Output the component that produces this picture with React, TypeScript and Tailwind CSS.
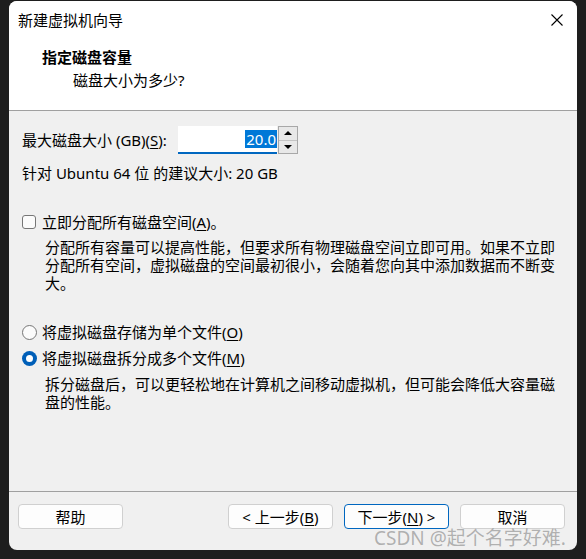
import React from "react";

const U = ({ children }: { children: React.ReactNode }) => (
  <span className="underline underline-offset-2 decoration-1">{children}</span>
);

export default function App() {
  return (
    <div className="w-[586px] h-[559px] bg-[#1e1e1e] pl-[9px] pt-[1px] relative overflow-hidden font-['Noto_Sans','Noto_Sans_CJK_SC',sans-serif] text-[15px] text-black">
      <div className="w-[568px] h-[549px] rounded-[8px] overflow-hidden bg-[#f0f0f0] flex flex-col">
        {/* Header */}
        <div className="h-[109px] bg-white border-b border-[#a0a0a0] box-content relative">
          <div className="pt-[9px] pl-[9px] leading-[20px]">新建虚拟机向导</div>
          <svg className="absolute left-[542px] top-[13px]" width="12" height="12" viewBox="0 0 12 12">
            <path d="M0.5 0.5 L11.5 11.5 M11.5 0.5 L0.5 11.5" stroke="#000" strokeWidth="1.1" fill="none" />
          </svg>
          <div className="mt-[17px] pl-[33px] leading-[20px] font-bold">指定磁盘容量</div>
          <div className="mt-[3px] pl-[64px] leading-[20px]">磁盘大小为多少?</div>
        </div>

        {/* Body */}
        <div className="flex-1 px-[13px]">
          <div className="mt-[15px] flex items-center h-[28px]">
            <div className="w-[156px] leading-[20px] whitespace-nowrap">
              最大磁盘大小 (GB)(<U>S</U>):
            </div>
            <div className="w-[99px] h-[28px] bg-white border-b-2 border-[#0067c0] flex items-center justify-end">
              <span className="bg-[#0078d7] text-white leading-[18px] px-[1px]">20.0</span>
            </div>
            <div className="ml-[1px] w-[20px] h-[28px] border border-[#a8a8a8] flex flex-col">
              <div className="flex-1 bg-[#e8e8e8] border-b border-[#c4c4c4] flex items-center justify-center">
                <svg width="8" height="4" viewBox="0 0 8 4"><path d="M0 4 L4 0 L8 4 Z" fill="#000" /></svg>
              </div>
              <div className="flex-1 bg-[#e8e8e8] flex items-center justify-center">
                <svg width="8" height="4" viewBox="0 0 8 4"><path d="M0 0 L8 0 L4 4 Z" fill="#000" /></svg>
              </div>
            </div>
          </div>

          <div className="mt-[9px] leading-[20px] whitespace-nowrap">针对 Ubuntu 64 位 的建议大小: 20 GB</div>

          <div className="mt-[29px] flex items-center h-[20px]">
            <div className="w-[14px] h-[14px] rounded-[3px] border border-[#767676] bg-[#fbfbfb]" />
            <div className="ml-[6px] leading-[20px] whitespace-nowrap">立即分配所有磁盘空间(<U>A</U>)。</div>
          </div>

          <div className="mt-[6px] ml-[23px] leading-[18px]">
            <div className="whitespace-nowrap">分配所有容量可以提高性能，但要求所有物理磁盘空间立即可用。如果不立即</div>
            <div className="whitespace-nowrap">分配所有空间，虚拟磁盘的空间最初很小，会随着您向其中添加数据而不断变</div>
            <div className="whitespace-nowrap">大。</div>
          </div>

          <div className="mt-[30px] flex items-center h-[20px]">
            <div className="w-[15px] h-[15px] rounded-full border border-[#767676] bg-[#fbfbfb]" />
            <div className="ml-[5px] leading-[20px] whitespace-nowrap">将虚拟磁盘存储为单个文件(<U>O</U>)</div>
          </div>

          <div className="mt-[6px] flex items-center h-[20px]">
            <div className="w-[15px] h-[15px] rounded-full bg-[#005fb8] flex items-center justify-center">
              <div className="w-[7px] h-[7px] rounded-full bg-white" />
            </div>
            <div className="ml-[5px] leading-[20px] whitespace-nowrap">将虚拟磁盘拆分成多个文件(<U>M</U>)</div>
          </div>

          <div className="mt-[7px] ml-[23px] leading-[18px]">
            <div className="whitespace-nowrap">拆分磁盘后，可以更轻松地在计算机之间移动虚拟机，但可能会降低大容量磁</div>
            <div className="whitespace-nowrap">盘的性能。</div>
          </div>
        </div>

        {/* Footer */}
        <div className="h-[46px] border-t border-[#a0a0a0] box-content pt-[12px] pl-[9px] pr-[12px] flex items-start">
          <button className="w-[105px] h-[25px] rounded-[4px] border border-[#d0d0d0] bg-[#fdfdfd] leading-[20px]">帮助</button>
          <div className="flex-1" />
          <button className="w-[105px] h-[25px] rounded-[4px] border border-[#d0d0d0] bg-[#fdfdfd] leading-[20px] whitespace-nowrap">
            &lt; 上一步(<U>B</U>)
          </button>
          <button className="ml-[11px] w-[105px] h-[25px] rounded-[4px] border border-[#0067c0] bg-[#fdfdfd] leading-[20px] whitespace-nowrap">
            下一步(<U>N</U>) &gt;
          </button>
          <button className="ml-[11px] w-[105px] h-[25px] rounded-[4px] border border-[#d0d0d0] bg-[#fdfdfd] leading-[20px]">取消</button>
        </div>
      </div>

      <div className="absolute left-[374px] top-[526px] text-[19px] leading-[24px] text-[rgba(120,120,120,0.55)] whitespace-nowrap">
        CSDN @起个名字好难.
      </div>
    </div>
  );
}
